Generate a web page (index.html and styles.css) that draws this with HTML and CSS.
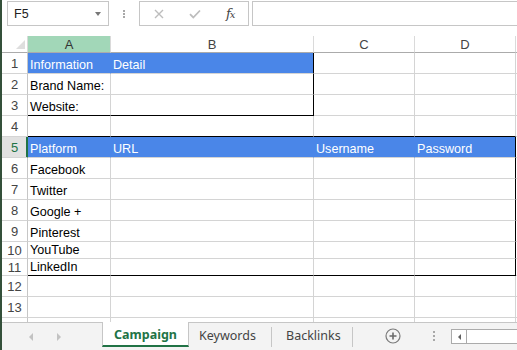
FILE: index.html
```html
<!DOCTYPE html>
<html>
<head>
<meta charset="utf-8">
<link rel="stylesheet" href="styles.css">
</head>
<body>
<div class="app">
  <div class="fbar">
    <div class="namebox"><span class="nb-text">F5</span><i class="caret"></i></div>
    <div class="vdots"><i></i><i></i><i></i></div>
    <div class="fxbox">
      <svg class="ico-x" width="10" height="10" viewBox="0 0 10 10"><path d="M1 1L9 9M9 1L1 9" stroke="#bdbdbd" stroke-width="1.4" fill="none"/></svg>
      <svg class="ico-ok" width="12" height="10" viewBox="0 0 12 10"><path d="M1 5.2L4.3 8.5L11 1.5" stroke="#bdbdbd" stroke-width="1.8" fill="none"/></svg>
      <span class="fx">f<span class="fx-x">x</span></span>
    </div>
    <div class="finput"></div>
  </div>

  <div class="sheet">
    <div class="row hdr">
      <div class="corner"><svg width="10" height="10" viewBox="0 0 10 10"><path d="M9 0V9H0Z" fill="#dedede"/></svg></div>
      <div class="ch sel">A</div><div class="ch">B</div><div class="ch">C</div><div class="ch">D</div><div class="ch last"></div>
    </div>
    <div class="row">
      <div class="rh">1</div>
      <div class="c fill">Information</div><div class="c fill bR">Detail</div><div class="c"></div><div class="c"></div><div class="c"></div>
    </div>
    <div class="row">
      <div class="rh">2</div>
      <div class="c">Brand Name:</div><div class="c bR"></div><div class="c"></div><div class="c"></div><div class="c"></div>
    </div>
    <div class="row">
      <div class="rh">3</div>
      <div class="c bB">Website:</div><div class="c bR bB"></div><div class="c"></div><div class="c"></div><div class="c"></div>
    </div>
    <div class="row">
      <div class="rh">4</div>
      <div class="c bB"></div><div class="c bB"></div><div class="c bB"></div><div class="c bB"></div><div class="c"></div>
    </div>
    <div class="row">
      <div class="rh act">5</div>
      <div class="c fill">Platform</div><div class="c fill">URL</div><div class="c fill">Username</div><div class="c fill bR">Password</div><div class="c"></div>
    </div>
    <div class="row">
      <div class="rh">6</div>
      <div class="c">Facebook</div><div class="c"></div><div class="c"></div><div class="c bR"></div><div class="c"></div>
    </div>
    <div class="row">
      <div class="rh">7</div>
      <div class="c">Twitter</div><div class="c"></div><div class="c"></div><div class="c bR"></div><div class="c"></div>
    </div>
    <div class="row">
      <div class="rh">8</div>
      <div class="c">Google +</div><div class="c"></div><div class="c"></div><div class="c bR"></div><div class="c"></div>
    </div>
    <div class="row">
      <div class="rh">9</div>
      <div class="c">Pinterest</div><div class="c"></div><div class="c"></div><div class="c bR"></div><div class="c"></div>
    </div>
    <div class="row short">
      <div class="rh">10</div>
      <div class="c">YouTube</div><div class="c"></div><div class="c"></div><div class="c bR"></div><div class="c"></div>
    </div>
    <div class="row short">
      <div class="rh">11</div>
      <div class="c bB">LinkedIn</div><div class="c bB"></div><div class="c bB"></div><div class="c bR bB"></div><div class="c"></div>
    </div>
    <div class="row">
      <div class="rh">12</div>
      <div class="c"></div><div class="c"></div><div class="c"></div><div class="c"></div><div class="c"></div>
    </div>
    <div class="row">
      <div class="rh">13</div>
      <div class="c"></div><div class="c"></div><div class="c"></div><div class="c"></div><div class="c"></div>
    </div>
    <div class="row">
      <div class="rh"></div>
      <div class="c"></div><div class="c"></div><div class="c"></div><div class="c"></div><div class="c"></div>
    </div>
  </div>

  <div class="tabs">
    <div class="nav">
      <span class="arr arr-l"></span>
      <span class="arr arr-r"></span>
    </div>
    <div class="tab active">Campaign</div>
    <div class="tab t-kw">Keywords</div>
    <div class="sep"></div>
    <div class="tab t-bl">Backlinks</div>
    <div class="sep"></div>
    <div class="addwrap">
      <svg width="16" height="16" viewBox="0 0 16 16"><circle cx="8" cy="8" r="7" fill="none" stroke="#7a7a7a" stroke-width="1.2"/><path d="M8 4.5V11.5M4.5 8H11.5" stroke="#6a6a6a" stroke-width="1.6"/></svg>
    </div>
    <div class="tdots"><i></i><i></i><i></i></div>
    <div class="hscroll">
      <div class="hs-btn"><span class="hs-arr"></span></div>
      <div class="hs-track"></div>
    </div>
  </div>
</div>
</body>
</html>
```

FILE: styles.css
```css
* { box-sizing: border-box; }
html, body { margin: 0; padding: 0; background: #fff; }
body { font-family: "Liberation Sans", Arial, sans-serif; }

.app {
  width: 517px;
  height: 350px;
  overflow: hidden;
  display: flex;
  flex-direction: column;
  border-left: 2px solid #34503a;
}

/* formula bar */
.fbar {
  height: 36px;
  flex: none;
  display: flex;
  align-items: flex-start;
  padding-top: 1px;
}
.namebox {
  margin-left: 5px;
  width: 102px;
  height: 25px;
  border: 1px solid #c6c6c6;
  display: flex;
  align-items: center;
  justify-content: space-between;
  padding: 0 7px 0 6px;
  font-size: 12.5px;
  color: #222;
}
.caret {
  width: 0; height: 0;
  border-left: 3.5px solid transparent;
  border-right: 3.5px solid transparent;
  border-top: 4px solid #777;
}
.vdots {
  width: 30px;
  height: 25px;
  display: flex;
  flex-direction: column;
  align-items: center;
  justify-content: center;
  gap: 1px;
}
.vdots i, .tdots i {
  display: block;
  width: 2px; height: 2px;
  background: #a8a8a8;
}
.fxbox {
  width: 110px;
  height: 25px;
  border: 1px solid #c6c6c6;
  display: flex;
  align-items: center;
  padding-left: 14px;
}
.ico-ok { margin-left: 25px; }
.fx {
  margin-left: 25px;
  font-family: "DejaVu Serif", "Liberation Serif", serif;
  font-style: italic;
  font-size: 13px;
  color: #444;
  letter-spacing: -1px;
}
.fx-x { font-size: 10px; }
.finput {
  margin-left: 3px;
  flex: 1;
  height: 25px;
  border: 1px solid #c6c6c6;
  border-right: none;
}

/* sheet */
.sheet {
  height: 286px;
  flex: none;
  overflow: hidden;
}
.row {
  display: grid;
  grid-template-columns: 26px 83px 203px 101px 101px 1fr;
  height: 21px;
}
.row.short { height: 17px; }
.row.hdr { height: 17px; }

.corner {
  border-right: 1px solid #dadada;
  border-bottom: 1px solid #ababab;
  display: flex;
  align-items: flex-end;
  justify-content: flex-end;
  padding: 0 1px 2px 0;
}
.ch {
  border-right: 1px solid #dadada;
  border-bottom: 1px solid #ababab;
  display: flex;
  align-items: center;
  justify-content: center;
  font-size: 13px;
  color: #444;
}
.ch.sel { background: #a2d7b8; color: #333; }
.ch.last { border-right: none; }

.rh {
  border-right: 1px solid #c6c6c6;
  border-bottom: 1px solid #d4d4d4;
  display: flex;
  align-items: center;
  justify-content: center;
  font-size: 13px;
  color: #444;
  padding-top: 1px;
}
.rh.act {
  background: #e1e1e1;
  color: #217346;
  border-right-color: #217346;
  box-shadow: inset -1px 0 0 #217346;
}

.c {
  border-right: 1px solid #d4d4d4;
  border-bottom: 1px solid #d4d4d4;
  display: flex;
  align-items: flex-end;
  padding: 0 2px 1px 2px;
  font-size: 12.6px;
  color: #000;
  white-space: nowrap;
  overflow: visible;
}
.c.fill { background: #4a86e8; color: #fff; border-right-color: #4a86e8; }
.c.bR { border-right-color: #000; }
.c.bB { border-bottom-color: #000; }

/* sheet tabs */
.tabs {
  flex: 1;
  background: #f3f3f3;
  border-top: 1px solid #c6c6c6;
  display: flex;
  align-items: stretch;
  font-family: "Noto Sans", "Open Sans", sans-serif;
  font-size: 12.5px;
  color: #444;
}
.nav {
  width: 100px;
  display: flex;
  align-items: center;
  padding-left: 27px;
  gap: 21px;
}
.arr { width: 0; height: 0; border-top: 4px solid transparent; border-bottom: 4px solid transparent; }
.arr-l { border-right: 4px solid #c2c2c2; }
.arr-r { border-left: 4px solid #c2c2c2; margin-left: 3px; }
.tab {
  display: flex;
  align-items: center;
}
.tab.active {
  width: 87px;
  margin-top: -1px;
  margin-bottom: 3px;
  background: #fff;
  border-left: 1px solid #c6c6c6;
  border-right: 1px solid #c6c6c6;
  border-bottom: 2px solid #217346;
  justify-content: center;
  font-weight: bold;
  color: #217346;
  padding-top: 1px;
}
.t-kw { width: 82px; padding-left: 10px; padding-bottom: 2px; }
.t-bl { width: 80px; padding-left: 14px; padding-bottom: 2px; }
.sep {
  width: 1px;
  background: #c6c6c6;
  margin: 4px 0 3px;
}
.addwrap {
  width: 80px;
  display: flex;
  align-items: center;
  padding-left: 32px;
  padding-bottom: 2px;
}
.tdots {
  width: 18px;
  display: flex;
  flex-direction: column;
  align-items: flex-start;
  justify-content: center;
  gap: 2px;
  padding-left: 0;
  padding-bottom: 2px;
}
.hscroll {
  flex: 1;
  margin: 6px 0 6px 0;
  height: 15px;
  align-self: flex-start;
  border: 1px solid #ababab;
  border-right: none;
  background: #fff;
  display: flex;
}
.hs-btn {
  width: 15px;
  border-right: 1px solid #ababab;
  display: flex;
  align-items: center;
  justify-content: center;
}
.hs-arr { width: 0; height: 0; border-top: 3px solid transparent; border-bottom: 3px solid transparent; border-right: 3px solid #606060; }
.hs-track { flex: 1; }
```
